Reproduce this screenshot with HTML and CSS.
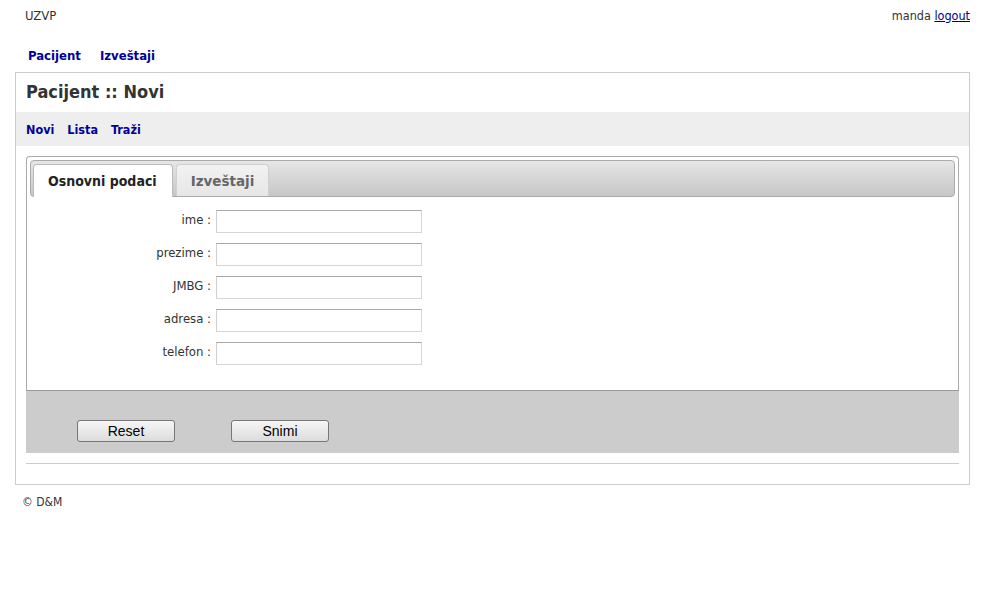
FILE: index.html
```html
<!DOCTYPE html>
<html>
<head>
<meta charset="utf-8">
<link rel="stylesheet" href="styles.css">
</head>
<body>
<div class="top">
  <div class="brand">UZVP</div>
  <div class="user">manda <a href="#">logout</a></div>
</div>
<nav class="mainnav"><a href="#">Pacijent</a><a href="#">Izveštaji</a></nav>
<div class="box">
  <h1 class="title">Pacijent :: Novi</h1>
  <div class="subnav"><a href="#">Novi</a><a href="#">Lista</a><a href="#">Traži</a></div>
  <div class="content">
    <div class="tabs">
      <div class="tabbar">
        <div class="tab active">Osnovni podaci</div>
        <div class="tab">Izveštaji</div>
      </div>
      <div class="form">
        <div class="row"><label>ime :</label><input class="field" type="text"></div>
        <div class="row"><label>prezime :</label><input class="field" type="text"></div>
        <div class="row"><label>JMBG :</label><input class="field" type="text"></div>
        <div class="row"><label>adresa :</label><input class="field" type="text"></div>
        <div class="row"><label>telefon :</label><input class="field" type="text"></div>
      </div>
    </div>
    <div class="actions">
      <button class="btn">Reset</button>
      <button class="btn">Snimi</button>
    </div>
    <div class="rule"></div>
  </div>
</div>
<div class="footer">© D&amp;M</div>
</body>
</html>
```

FILE: styles.css
```css
html, body { margin: 0; padding: 0; background: #fff; }
body {
  font-family: "DejaVu Sans Condensed", "DejaVu Sans", sans-serif;
  font-size: 12.5px;
  color: #333;
  padding: 0 14px 0 15px;
}
.top {
  display: flex;
  justify-content: space-between;
  align-items: center;
  height: 30px;
  padding: 0 0 0 10px;
}
.brand { font-size: 13px; }
.user a { color: #00008b; }
.mainnav {
  display: flex;
  gap: 19px;
  padding: 18px 0 0 13px;
  height: 24px;
  align-items: flex-start;
}
.mainnav a, .subnav a {
  color: #00009c;
  font-weight: bold;
  text-decoration: none;
  font-size: 13px;
}
.subnav a { font-size: 12.5px; }
.box {
  border: 1px solid #ccc;
  padding: 0 0 20px 0;
}
.title {
  margin: 0;
  font-size: 18px;
  font-weight: bold;
  color: #333;
  height: 39px;
  line-height: 38px;
  padding-left: 10px;
}
.subnav {
  background: #eee;
  height: 34px;
  display: flex;
  align-items: center;
  gap: 13px;
  padding-left: 10px;
}
.content {
  padding: 10px 10px 0 10px;
}
.tabs {
  border: 1px solid #aaa;
  border-bottom-color: #999;
  border-radius: 4px 4px 0 0;
  padding: 3px;
  height: 227px;
}
.tabbar {
  height: 35px;
  border: 1px solid #aaa;
  border-radius: 4px;
  background: linear-gradient(#e6e6e6, #c6c6c6);
  display: flex;
  align-items: flex-end;
  padding-left: 2px;
  gap: 3px;
}
.tab {
  height: 31px;
  line-height: 32px;
  padding: 0 14px;
  font-size: 13.5px;
  font-weight: bold;
  border: 1px solid #d0d0d0;
  border-bottom: none;
  border-radius: 4px 4px 0 0;
  background: linear-gradient(#f2f2f2, #e6e6e6);
  color: #666;
  font-family: "DejaVu Sans", sans-serif;
}
.tab.active {
  background: #fff;
  color: #222;
  height: 32px;
  margin-bottom: -1px;
  border-color: #bbb;
  font-size: 14px;
  padding: 0 15px 0 14px;
  font-family: "DejaVu Sans Condensed", sans-serif;
}
.form {
  padding-top: 13px;
  display: flex;
  flex-direction: column;
  gap: 10px;
}
.row {
  display: flex;
  align-items: center;
  height: 23px;
}
.row label {
  width: 181px;
  text-align: right;
  padding-right: 5px;
  font-size: 13px;
  color: #333;
  position: relative;
  top: -2px;
}
.field {
  box-sizing: border-box;
  width: 206px;
  height: 23px;
  margin: 0;
  border: 1px solid #d6d6d6;
  border-top-color: #a8a8a8;
  border-left-color: #cfcfcf;
  background: #fff;
  padding: 2px;
}
.actions {
  background: #ccc;
  height: 62px;
  display: flex;
  align-items: flex-end;
  gap: 56px;
  padding: 0 0 11px 51px;
  box-sizing: border-box;
}
.btn {
  width: 98px;
  height: 22px;
  font-family: "Liberation Sans", Arial, sans-serif;
  font-size: 14px;
  color: #000;
  border: 1px solid #777;
  border-radius: 3px;
  background: linear-gradient(#f6f6f6, #dcdcdc);
  padding: 0;
}
.rule {
  border-top: 1px solid #ccc;
  margin-top: 10px;
}
.footer {
  padding: 10px 0 0 7px;
  font-size: 12px;
}
```
